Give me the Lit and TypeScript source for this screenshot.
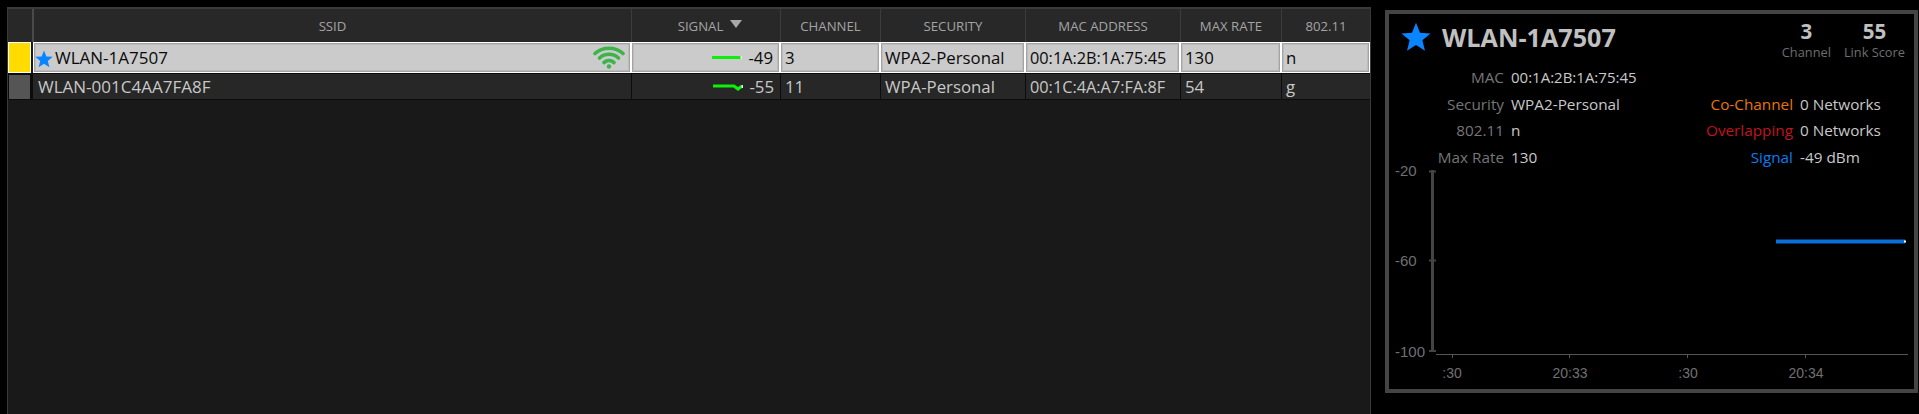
import { LitElement, html, css, svg } from "lit";
import { customElement } from "lit/decorators.js";

const star = (size: number) => html`<svg class="star" width=${size} height=${size} viewBox="0 0 24 24"><path d="M12 .5l3.200 8 8.400.6-6.500 5.400 2.100 8.500L12 18.400l-7.200 4.600 2.100-8.500L.4 9.100l8.400-.6z" fill="#0a84ff"/></svg>`;

const wifi = html`<svg class="wifi" width="32" height="23" viewBox="0 0 32 23" fill="none" stroke="#3cb44a" stroke-width="3.600" stroke-linecap="round"><path d="M2 7.500C9.500 .5 22.500 .5 30 7.500"/><path d="M6.500 12C12 7 20 7 25.500 12"/><path d="M11 16.500C14 14 18 14 21 16.500"/><circle cx="16" cy="20.500" r="2.200" fill="#3cb44a" stroke="none"/></svg>`;

const spark = (dip: boolean) => html`<svg class="spark" width="30" height="8" viewBox="0 0 30 8" fill="none" stroke="#0cf00c" stroke-width="3">${dip ? svg`<path d="M0 3H21L25 6L29 3"/>` : svg`<path d="M0 3.500H29"/>`}<rect x="28.500" y="2" width="1.500" height="3" fill="#e8e8e8" stroke="none"/></svg>`;

@customElement("app-root")
export class AppRoot extends LitElement {
  static styles = css`
    :host { display: block; width: 1919px; height: 414px; background: #000; overflow: hidden; font-family: "Open Sans", sans-serif; }
    .page { display: flex; height: 414px; padding: 7px 0 0 7px; box-sizing: border-box; gap: 14px; align-items: flex-start; }
    .table { width: 1364px; height: 407px; flex: none; background: #191919; border-top: 2px solid #3a3a3a; border-left: 1px solid #3a3a3a; border-right: 1px solid #3a3a3a; box-sizing: border-box; }
    .grid { display: grid; grid-template-columns: 24px 599px 149px 100px 145px 155px 101px 1fr; }
    .head { height: 33px; background: #282828; display: flex; align-items: center; justify-content: center; gap: 7px; color: #a4a4a4; font-size: 13.200px; border-left: 1px solid #3c3c3c; box-sizing: border-box; }
    .head:first-child { border-left: 0; }
    .head:first-child + .head { border-left: 2px solid #4a4a4a; }
    .head.sorted { padding-left: 8px; }
    .arrow { width: 0; height: 0; border-left: 6px solid transparent; border-right: 6px solid transparent; border-top: 8px solid #a8a8a8; margin-top: -4px; }
    .cell { display: flex; align-items: center; font-size: 16.800px; padding-left: 4px; box-sizing: border-box; min-width: 0; white-space: nowrap; }
    .sel { height: 31px; background: #cbcbcb; color: #0a0a0a; border: 1px solid #fff; box-shadow: inset 0 0 0 1px #a4a4a4, inset 0 0 0 2px #bcbcbc; }
    .un { height: 27px; background: #272727; color: #c8c8c8; border-left: 1px solid #0c0c0c; border-top: 1px solid #0c0c0c; border-bottom: 1px solid #0c0c0c; }
    .swatch { padding: 0; }
    .mark-y { background: #ffdc00; box-shadow: none; margin-right: 1px; }
    .mark-g { background: #555; border: 2px solid #0c0c0c; border-width: 2px 2px 1px 1px; }
    .ssid { justify-content: flex-start; gap: 2px; padding-left: 1px; font-size: 17px; }
    .ssid.sel { margin-left: 1px; }
    .ssid .star { margin-top: 3px; }
    .ssid.un { padding-left: 5px; }
    .mac { font-size: 16.300px; }
    .grow { flex: 1; }
    .star { flex: none; }
    .wifi { margin-right: 5px; flex: none; }
    .sig { justify-content: flex-end; padding-right: 6px; gap: 6px; font-size: 16.800px; }
    .panel { width: 533px; height: 383px; flex: none; margin-top: 3px; border: 4px solid #444; box-sizing: border-box; background: #000; display: flex; flex-direction: column; position: relative; color: #ccc; }
    .top { display: flex; justify-content: space-between; padding: 4px 9px 0 12px; height: 50px; box-sizing: border-box; }
    .title { display: flex; align-items: center; gap: 11px; font-size: 25.200px; font-weight: 700; color: #c0c0c0; height: 38px; }
    .stats { display: flex; gap: 13px; }
    .stat { display: flex; flex-direction: column; align-items: center; padding-top: 1px; }
    .stat b { font-size: 20.500px; line-height: 24px; color: #c0c0c0; }
    .stat span { font-size: 12.800px; line-height: 18px; color: #6e6e6e; }
    .info { display: grid; grid-template-columns: 115px 128px 282px; grid-auto-rows: 26.600px; font-size: 15.300px; position: relative; z-index: 1; }
    .kv { display: flex; align-items: center; gap: 7px; white-space: nowrap; }
    .l { color: #767676; }
    .v { color: #c9c9c9; }
    .v.m { font-size: 15px; }
    .lw { width: 115px; text-align: right; flex: none; }
    .rl { display: grid; grid-template-columns: 161px 1fr; gap: 7px; align-items: center; white-space: nowrap; }
    .rl .a { text-align: right; }
    .o { color: #e87700; }
    .r { color: #c0141c; }
    .b { color: #0a7cf0; }
    .chart { position: absolute; left: 0; top: 0; }
    .chart text { font-family: "Liberation Sans", sans-serif; font-size: 14px; fill: #707070; }
    .chart .yl { font-size: 15px; }
  `;

  render() {
    return html`<div class="page">
      <div class="table">
        <div class="grid">
          <div class="head"></div><div class="head">SSID</div>
          <div class="head sorted">SIGNAL <i class="arrow"></i></div><div class="head">CHANNEL</div><div class="head">SECURITY</div>
          <div class="head">MAC ADDRESS</div><div class="head">MAX RATE</div><div class="head">802.11</div>

          <div class="cell sel swatch mark-y"></div>
          <div class="cell sel ssid">${star(18)}<span>WLAN-1A7507</span><span class="grow"></span>${wifi}</div>
          <div class="cell sel sig">${spark(false)}<span>-49</span></div>
          <div class="cell sel">3</div><div class="cell sel">WPA2-Personal</div>
          <div class="cell sel mac">00:1A:2B:1A:75:45</div><div class="cell sel">130</div><div class="cell sel">n</div>

          <div class="cell un swatch mark-g"></div>
          <div class="cell un ssid">WLAN-001C4AA7FA8F</div>
          <div class="cell un sig">${spark(true)}<span>-55</span></div>
          <div class="cell un">11</div><div class="cell un">WPA-Personal</div>
          <div class="cell un mac">00:1C:4A:A7:FA:8F</div><div class="cell un">54</div><div class="cell un">g</div>
        </div>
      </div>
      <div class="panel">
        <div class="top">
          <div class="title">${star(30)}<span>WLAN-1A7507</span></div>
          <div class="stats">
            <div class="stat"><b>3</b><span>Channel</span></div>
            <div class="stat"><b>55</b><span>Link Score</span></div>
          </div>
        </div>
        <div class="info">
          <div class="kv"><span class="l lw">MAC</span><span class="v m">00:1A:2B:1A:75:45</span></div><div></div><div></div>
          <div class="kv"><span class="l lw">Security</span><span class="v">WPA2-Personal</span></div><div></div><div class="rl"><span class="a o">Co-Channel</span><span class="v">0 Networks</span></div>
          <div class="kv"><span class="l lw">802.11</span><span class="v">n</span></div><div></div><div class="rl"><span class="a r">Overlapping</span><span class="v">0 Networks</span></div>
          <div class="kv"><span class="l lw">Max Rate</span><span class="v">130</span></div><div></div><div class="rl"><span class="a b">Signal</span><span class="v">-49 dBm</span></div>
        </div>
        <svg class="chart" width="525" height="375" viewBox="1389 14 525 375">
          <path d="M1432.500 170V352" stroke="#444" stroke-width="3"/>
          <path d="M1429 171.500H1436M1429 260.500H1436M1429 351H1436" stroke="#444" stroke-width="2"/>
          <path d="M1436 354.500H1908" stroke="#555" stroke-width="1"/>
          <path d="M1452.500 354V358M1569.500 354V358M1687.500 354V358M1805.500 354V358" stroke="#555" stroke-width="1"/>
          <text class="yl" x="1395" y="176">-20</text><text class="yl" x="1395" y="266">-60</text><text class="yl" x="1395" y="357">-100</text>
          <text x="1452" y="378" text-anchor="middle">:30</text><text x="1570" y="378" text-anchor="middle">20:33</text>
          <text x="1688" y="378" text-anchor="middle">:30</text><text x="1806" y="378" text-anchor="middle">20:34</text>
          <path d="M1776 241.500H1905" stroke="#0a6fd8" stroke-width="4"/>
          <rect x="1904" y="240.500" width="2" height="2" fill="#fff"/>
        </svg>
      </div>
    </div>`;
  }
}
